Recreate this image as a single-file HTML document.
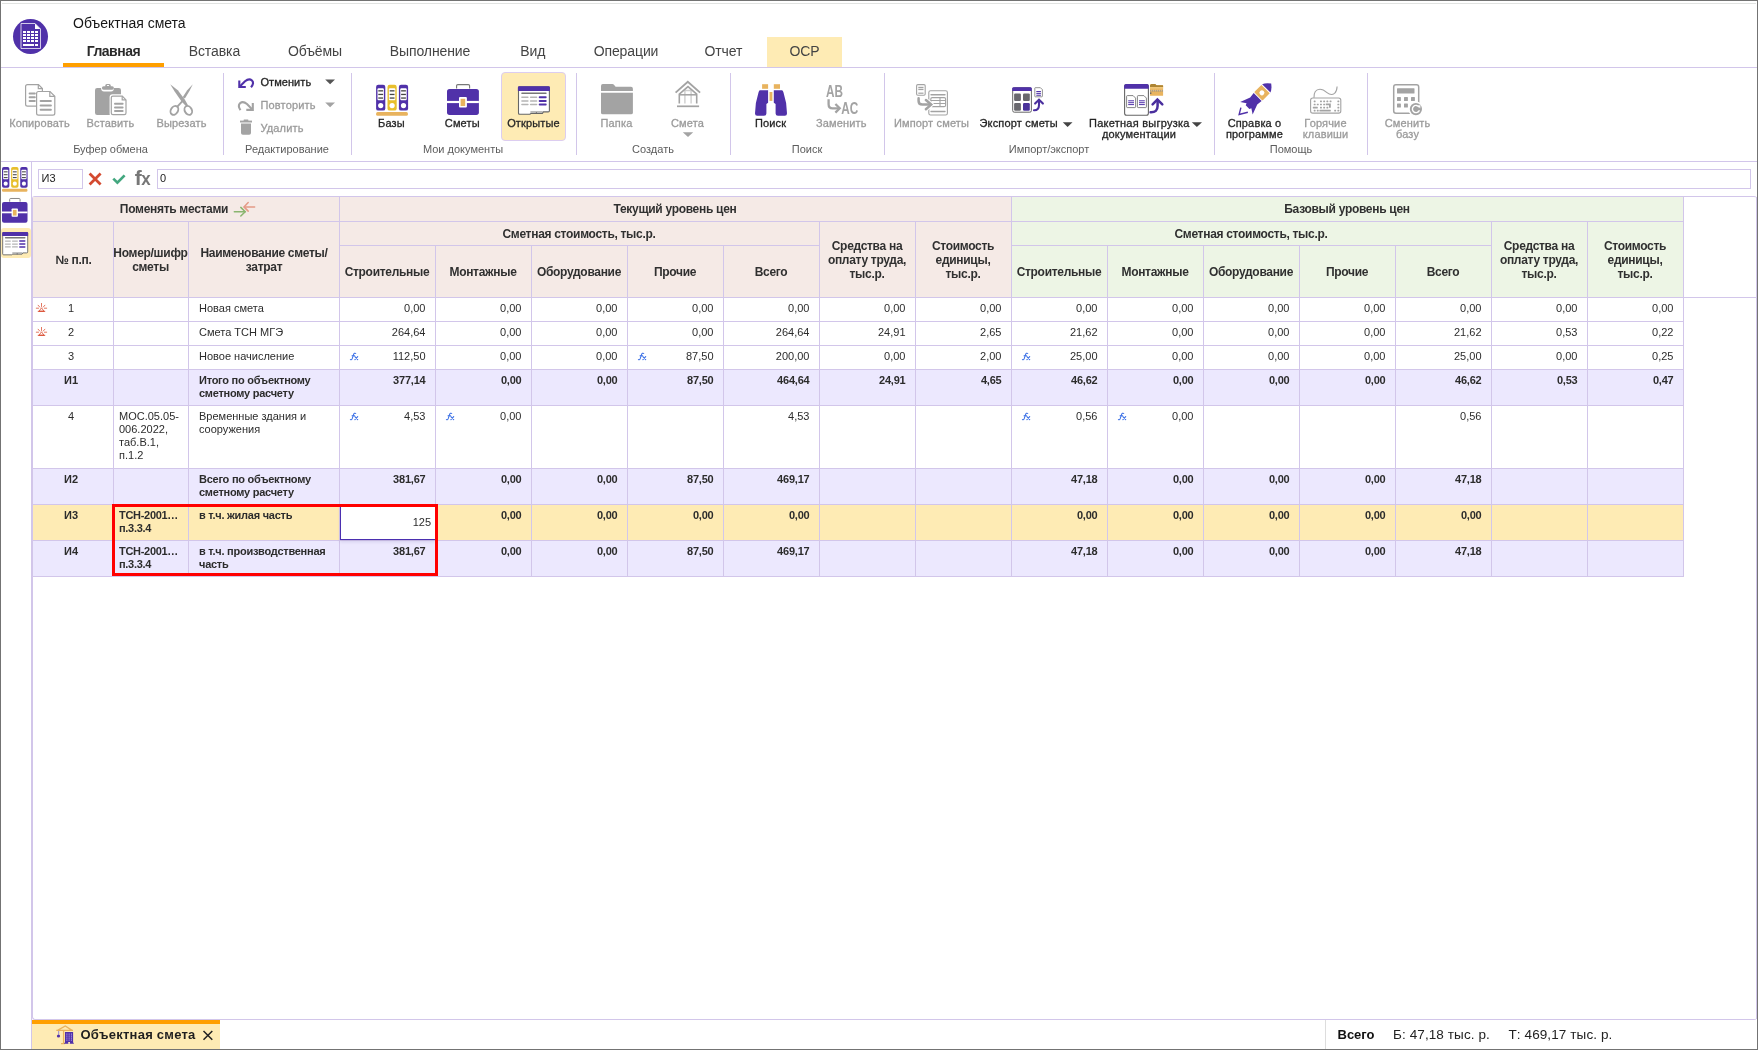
<!DOCTYPE html>
<html><head><meta charset="utf-8"><title>Объектная смета</title>
<style>
html,body{margin:0;padding:0;background:#fff;}
#root{will-change:transform;position:relative;width:1758px;height:1050px;overflow:hidden;background:#fff;font-family:"Liberation Sans",sans-serif;}
#root>div{position:absolute;}
.t{white-space:nowrap;}
svg{position:absolute;left:0;top:0;}
</style></head><body>
<div id="root">
<div style="left:0px;top:0px;width:1758px;height:1px;background:#737373;"></div>
<div style="left:0px;top:0px;width:1px;height:1050px;background:#737373;"></div>
<div style="left:1757px;top:0px;width:1px;height:1050px;background:#737373;"></div>
<div style="left:0px;top:1049px;width:1758px;height:1px;background:#737373;"></div>
<div style="left:2px;top:3px;width:1754px;height:1px;background:#e1e3e1;"></div>
<div class="t" style="top:16px;font-size:14px;line-height:14px;color:#161616;left:73px;">Объектная смета</div>
<div style="left:767px;top:37px;width:75px;height:30px;background:#feebb4;"></div>
<div style="left:63px;top:63px;width:101px;height:4px;background:#ff9f00;"></div>
<div class="t" style="top:44px;font-size:14px;line-height:14px;color:#2a2a2a;font-weight:700;letter-spacing:-0.5px;left:-186.6px;width:600px;text-align:center;">Главная</div>
<div class="t" style="top:44px;font-size:14px;line-height:14px;color:#444;letter-spacing:-0.1px;left:-85.6px;width:600px;text-align:center;">Вставка</div>
<div class="t" style="top:44px;font-size:14px;line-height:14px;color:#444;letter-spacing:-0.1px;left:15px;width:600px;text-align:center;">Объёмы</div>
<div class="t" style="top:44px;font-size:14px;line-height:14px;color:#444;letter-spacing:-0.1px;left:130px;width:600px;text-align:center;">Выполнение</div>
<div class="t" style="top:44px;font-size:14px;line-height:14px;color:#444;letter-spacing:-0.1px;left:232.79999999999995px;width:600px;text-align:center;">Вид</div>
<div class="t" style="top:44px;font-size:14px;line-height:14px;color:#444;letter-spacing:-0.1px;left:326px;width:600px;text-align:center;">Операции</div>
<div class="t" style="top:44px;font-size:14px;line-height:14px;color:#444;letter-spacing:-0.1px;left:423.4px;width:600px;text-align:center;">Отчет</div>
<div class="t" style="top:44px;font-size:14px;line-height:14px;color:#444;letter-spacing:-0.1px;left:504.5px;width:600px;text-align:center;">ОСР</div>
<div style="left:1px;top:67px;width:1756px;height:1px;background:#d2c6ea;"></div>
<div style="left:223px;top:73px;width:1px;height:82px;background:#d2c6ea;"></div>
<div style="left:351px;top:73px;width:1px;height:82px;background:#d2c6ea;"></div>
<div style="left:576px;top:73px;width:1px;height:82px;background:#d2c6ea;"></div>
<div style="left:730px;top:73px;width:1px;height:82px;background:#d2c6ea;"></div>
<div style="left:884px;top:73px;width:1px;height:82px;background:#d2c6ea;"></div>
<div style="left:1214px;top:73px;width:1px;height:82px;background:#d2c6ea;"></div>
<div style="left:1367px;top:73px;width:1px;height:82px;background:#d2c6ea;"></div>
<div style="left:1px;top:161px;width:1756px;height:1px;background:#d2c6ea;"></div>
<div class="t" style="top:118px;font-size:11px;line-height:11px;color:#9b9b9b;letter-spacing:0.15px;left:-260.5px;width:600px;text-align:center;-webkit-text-stroke:0.3px #9b9b9b;">Копировать</div>
<div class="t" style="top:118px;font-size:11px;line-height:11px;color:#9b9b9b;letter-spacing:0.15px;left:-189.5px;width:600px;text-align:center;-webkit-text-stroke:0.3px #9b9b9b;">Вставить</div>
<div class="t" style="top:118px;font-size:11px;line-height:11px;color:#9b9b9b;letter-spacing:0.15px;left:-118.5px;width:600px;text-align:center;-webkit-text-stroke:0.3px #9b9b9b;">Вырезать</div>
<div class="t" style="top:144px;font-size:11px;line-height:11px;color:#5c5c5c;left:-189.5px;width:600px;text-align:center;">Буфер обмена</div>
<div class="t" style="top:77px;font-size:11px;line-height:11px;color:#262626;letter-spacing:0.05px;left:260.5px;-webkit-text-stroke:0.3px #222;">Отменить</div>
<div class="t" style="top:100px;font-size:11px;line-height:11px;color:#9b9b9b;letter-spacing:0.15px;left:260.5px;-webkit-text-stroke:0.3px #9b9b9b;">Повторить</div>
<div class="t" style="top:123px;font-size:11px;line-height:11px;color:#9b9b9b;letter-spacing:0.15px;left:260.5px;-webkit-text-stroke:0.3px #9b9b9b;">Удалить</div>
<div class="t" style="top:144px;font-size:11px;line-height:11px;color:#5c5c5c;left:-13px;width:600px;text-align:center;">Редактирование</div>
<div class="t" style="top:118px;font-size:11px;line-height:11px;color:#262626;letter-spacing:0.15px;left:91.5px;width:600px;text-align:center;-webkit-text-stroke:0.3px #262626;">Базы</div>
<div class="t" style="top:118px;font-size:11px;line-height:11px;color:#262626;letter-spacing:0.15px;left:162.3px;width:600px;text-align:center;-webkit-text-stroke:0.3px #262626;">Сметы</div>
<div style="left:501px;top:72px;width:65px;height:69px;background:#feebb4;border:1px solid #dccdf0;box-sizing:border-box;border-radius:4px;"></div>
<div class="t" style="top:118px;font-size:11px;line-height:11px;color:#262626;letter-spacing:0.15px;left:233.5px;width:600px;text-align:center;-webkit-text-stroke:0.3px #262626;">Открытые</div>
<div class="t" style="top:144px;font-size:11px;line-height:11px;color:#5c5c5c;left:163px;width:600px;text-align:center;">Мои документы</div>
<div class="t" style="top:118px;font-size:11px;line-height:11px;color:#9b9b9b;letter-spacing:0.15px;left:316.5px;width:600px;text-align:center;-webkit-text-stroke:0.3px #9b9b9b;">Папка</div>
<div class="t" style="top:118px;font-size:11px;line-height:11px;color:#9b9b9b;letter-spacing:0.15px;left:387.5px;width:600px;text-align:center;-webkit-text-stroke:0.3px #9b9b9b;">Смета</div>
<div class="t" style="top:144px;font-size:11px;line-height:11px;color:#5c5c5c;left:353px;width:600px;text-align:center;">Создать</div>
<div class="t" style="top:118px;font-size:11px;line-height:11px;color:#262626;letter-spacing:0.15px;left:470.5px;width:600px;text-align:center;-webkit-text-stroke:0.3px #262626;">Поиск</div>
<div class="t" style="top:118px;font-size:11px;line-height:11px;color:#9b9b9b;letter-spacing:0.15px;left:541.3px;width:600px;text-align:center;-webkit-text-stroke:0.3px #9b9b9b;">Заменить</div>
<div class="t" style="top:144px;font-size:11px;line-height:11px;color:#5c5c5c;left:507px;width:600px;text-align:center;">Поиск</div>
<div class="t" style="top:118px;font-size:11px;line-height:11px;color:#9b9b9b;letter-spacing:0.15px;left:631.5px;width:600px;text-align:center;-webkit-text-stroke:0.3px #9b9b9b;">Импорт сметы</div>
<div class="t" style="top:118px;font-size:11px;line-height:11px;color:#262626;letter-spacing:0.17px;left:979.5px;-webkit-text-stroke:0.3px #222;">Экспорт сметы</div>
<div class="t" style="top:118px;font-size:11px;line-height:11px;color:#262626;letter-spacing:0.25px;left:1089px;-webkit-text-stroke:0.3px #222;">Пакетная выгрузка</div>
<div class="t" style="top:129px;font-size:11px;line-height:11px;color:#262626;letter-spacing:0.15px;left:839px;width:600px;text-align:center;-webkit-text-stroke:0.3px #262626;">документации</div>
<div class="t" style="top:144px;font-size:11px;line-height:11px;color:#5c5c5c;left:749px;width:600px;text-align:center;">Импорт/экспорт</div>
<div class="t" style="top:118px;font-size:11px;line-height:11px;color:#262626;letter-spacing:0.15px;left:954.5px;width:600px;text-align:center;-webkit-text-stroke:0.3px #262626;">Справка о</div>
<div class="t" style="top:128.5px;font-size:11px;line-height:11px;color:#262626;letter-spacing:0.15px;left:954.5px;width:600px;text-align:center;-webkit-text-stroke:0.3px #262626;">программе</div>
<div class="t" style="top:118px;font-size:11px;line-height:11px;color:#9b9b9b;letter-spacing:0.15px;left:1025.5px;width:600px;text-align:center;-webkit-text-stroke:0.3px #9b9b9b;">Горячие</div>
<div class="t" style="top:128.5px;font-size:11px;line-height:11px;color:#9b9b9b;letter-spacing:0.15px;left:1025.5px;width:600px;text-align:center;-webkit-text-stroke:0.3px #9b9b9b;">клавиши</div>
<div class="t" style="top:144px;font-size:11px;line-height:11px;color:#5c5c5c;left:991px;width:600px;text-align:center;">Помощь</div>
<div class="t" style="top:118px;font-size:11px;line-height:11px;color:#9b9b9b;letter-spacing:0.15px;left:1107.5px;width:600px;text-align:center;-webkit-text-stroke:0.3px #9b9b9b;">Сменить</div>
<div class="t" style="top:128.5px;font-size:11px;line-height:11px;color:#9b9b9b;letter-spacing:0.15px;left:1107.5px;width:600px;text-align:center;-webkit-text-stroke:0.3px #9b9b9b;">базу</div>
<div style="left:31px;top:161px;width:1px;height:888px;background:#d2c6ea;"></div>
<div style="left:1px;top:228px;width:30px;height:30px;background:#feebb4;border-radius:3px;"></div>
<div style="left:38px;top:169px;width:45px;height:20px;background:#fff;border:1px solid #d2c6ea;box-sizing:border-box;"></div>
<div class="t" style="top:173px;font-size:11px;line-height:11px;color:#222;left:41.5px;">И3</div>
<div style="left:157px;top:169px;width:1594px;height:20px;background:#fff;border:1px solid #d2c6ea;box-sizing:border-box;"></div>
<div class="t" style="top:173px;font-size:11px;line-height:11px;color:#222;left:160px;">0</div>
<div style="left:32px;top:196px;width:1725px;height:824px;box-sizing:border-box;border:1px solid #d2c6ea;border-right:none;border-radius:3px 3px 3px 3px;"></div>
<div style="left:1756px;top:197px;width:1px;height:822px;background:#d2c6ea;"></div>
<div style="left:33px;top:197px;width:978px;height:100px;background:#f5eae6;"></div>
<div style="left:1012px;top:197px;width:671px;height:100px;background:#edf5e5;"></div>
<div style="left:33px;top:370px;width:1650px;height:35px;background:#ece8fe;"></div>
<div style="left:33px;top:469px;width:1650px;height:35px;background:#ece8fe;"></div>
<div style="left:33px;top:505px;width:1650px;height:35px;background:#feebb4;"></div>
<div style="left:33px;top:541px;width:1650px;height:35px;background:#ece8fe;"></div>
<div style="left:33px;top:221px;width:1650px;height:1px;background:#d2c6ea;"></div>
<div style="left:339px;top:245px;width:480px;height:1px;background:#d2c6ea;"></div>
<div style="left:1011px;top:245px;width:480px;height:1px;background:#d2c6ea;"></div>
<div style="left:33px;top:297px;width:1724px;height:1px;background:#d2c6ea;"></div>
<div style="left:339px;top:197px;width:1px;height:100px;background:#d2c6ea;"></div>
<div style="left:1011px;top:197px;width:1px;height:100px;background:#d2c6ea;"></div>
<div style="left:1683px;top:197px;width:1px;height:100px;background:#d2c6ea;"></div>
<div style="left:113px;top:221px;width:1px;height:76px;background:#d2c6ea;"></div>
<div style="left:188px;top:221px;width:1px;height:76px;background:#d2c6ea;"></div>
<div style="left:819px;top:221px;width:1px;height:76px;background:#d2c6ea;"></div>
<div style="left:915px;top:221px;width:1px;height:76px;background:#d2c6ea;"></div>
<div style="left:1491px;top:221px;width:1px;height:76px;background:#d2c6ea;"></div>
<div style="left:1587px;top:221px;width:1px;height:76px;background:#d2c6ea;"></div>
<div style="left:435px;top:245px;width:1px;height:52px;background:#d2c6ea;"></div>
<div style="left:531px;top:245px;width:1px;height:52px;background:#d2c6ea;"></div>
<div style="left:627px;top:245px;width:1px;height:52px;background:#d2c6ea;"></div>
<div style="left:723px;top:245px;width:1px;height:52px;background:#d2c6ea;"></div>
<div style="left:1107px;top:245px;width:1px;height:52px;background:#d2c6ea;"></div>
<div style="left:1203px;top:245px;width:1px;height:52px;background:#d2c6ea;"></div>
<div style="left:1299px;top:245px;width:1px;height:52px;background:#d2c6ea;"></div>
<div style="left:1395px;top:245px;width:1px;height:52px;background:#d2c6ea;"></div>
<div style="left:33px;top:321px;width:1651px;height:1px;background:#d2c6ea;"></div>
<div style="left:33px;top:345px;width:1651px;height:1px;background:#d2c6ea;"></div>
<div style="left:33px;top:369px;width:1651px;height:1px;background:#d2c6ea;"></div>
<div style="left:33px;top:405px;width:1651px;height:1px;background:#d2c6ea;"></div>
<div style="left:33px;top:468px;width:1651px;height:1px;background:#d2c6ea;"></div>
<div style="left:33px;top:504px;width:1651px;height:1px;background:#d2c6ea;"></div>
<div style="left:33px;top:540px;width:1651px;height:1px;background:#d2c6ea;"></div>
<div style="left:33px;top:576px;width:1651px;height:1px;background:#d2c6ea;"></div>
<div style="left:113px;top:297px;width:1px;height:279px;background:#d2c6ea;"></div>
<div style="left:188px;top:297px;width:1px;height:279px;background:#d2c6ea;"></div>
<div style="left:339px;top:297px;width:1px;height:279px;background:#d2c6ea;"></div>
<div style="left:435px;top:297px;width:1px;height:279px;background:#d2c6ea;"></div>
<div style="left:531px;top:297px;width:1px;height:279px;background:#d2c6ea;"></div>
<div style="left:627px;top:297px;width:1px;height:279px;background:#d2c6ea;"></div>
<div style="left:723px;top:297px;width:1px;height:279px;background:#d2c6ea;"></div>
<div style="left:819px;top:297px;width:1px;height:279px;background:#d2c6ea;"></div>
<div style="left:915px;top:297px;width:1px;height:279px;background:#d2c6ea;"></div>
<div style="left:1011px;top:297px;width:1px;height:279px;background:#d2c6ea;"></div>
<div style="left:1107px;top:297px;width:1px;height:279px;background:#d2c6ea;"></div>
<div style="left:1203px;top:297px;width:1px;height:279px;background:#d2c6ea;"></div>
<div style="left:1299px;top:297px;width:1px;height:279px;background:#d2c6ea;"></div>
<div style="left:1395px;top:297px;width:1px;height:279px;background:#d2c6ea;"></div>
<div style="left:1491px;top:297px;width:1px;height:279px;background:#d2c6ea;"></div>
<div style="left:1587px;top:297px;width:1px;height:279px;background:#d2c6ea;"></div>
<div style="left:1683px;top:297px;width:1px;height:279px;background:#d2c6ea;"></div>
<div style="left:1683px;top:196px;width:1px;height:379px;background:#d2c6ea;"></div>
<div class="t" style="top:203px;font-size:12px;line-height:12px;color:#303030;font-weight:700;letter-spacing:-0.3px;left:-126px;width:600px;text-align:center;">Поменять местами</div>
<div class="t" style="top:203px;font-size:12px;line-height:12px;color:#303030;font-weight:700;letter-spacing:-0.3px;left:375px;width:600px;text-align:center;">Текущий уровень цен</div>
<div class="t" style="top:203px;font-size:12px;line-height:12px;color:#303030;font-weight:700;letter-spacing:-0.3px;left:1047px;width:600px;text-align:center;">Базовый уровень цен</div>
<div class="t" style="top:228px;font-size:12px;line-height:12px;color:#303030;font-weight:700;letter-spacing:-0.3px;left:279px;width:600px;text-align:center;">Сметная стоимость, тыс.р.</div>
<div class="t" style="top:228px;font-size:12px;line-height:12px;color:#303030;font-weight:700;letter-spacing:-0.3px;left:951px;width:600px;text-align:center;">Сметная стоимость, тыс.р.</div>
<div class="t" style="top:254px;font-size:12px;line-height:12px;color:#303030;font-weight:700;letter-spacing:-0.3px;left:-226.5px;width:600px;text-align:center;">№ п.п.</div>
<div class="t" style="top:247px;font-size:12px;line-height:12px;color:#303030;font-weight:700;letter-spacing:-0.3px;left:-149.5px;width:600px;text-align:center;">Номер/шифр</div>
<div class="t" style="top:260.5px;font-size:12px;line-height:12px;color:#303030;font-weight:700;letter-spacing:-0.3px;left:-149.5px;width:600px;text-align:center;">сметы</div>
<div class="t" style="top:247px;font-size:12px;line-height:12px;color:#303030;font-weight:700;letter-spacing:-0.3px;left:-36px;width:600px;text-align:center;">Наименование сметы/</div>
<div class="t" style="top:260.5px;font-size:12px;line-height:12px;color:#303030;font-weight:700;letter-spacing:-0.3px;left:-36px;width:600px;text-align:center;">затрат</div>
<div class="t" style="top:266px;font-size:12px;line-height:12px;color:#303030;font-weight:700;letter-spacing:-0.3px;left:87px;width:600px;text-align:center;">Строительные</div>
<div class="t" style="top:266px;font-size:12px;line-height:12px;color:#303030;font-weight:700;letter-spacing:-0.3px;left:183px;width:600px;text-align:center;">Монтажные</div>
<div class="t" style="top:266px;font-size:12px;line-height:12px;color:#303030;font-weight:700;letter-spacing:-0.3px;left:279px;width:600px;text-align:center;">Оборудование</div>
<div class="t" style="top:266px;font-size:12px;line-height:12px;color:#303030;font-weight:700;letter-spacing:-0.3px;left:375px;width:600px;text-align:center;">Прочие</div>
<div class="t" style="top:266px;font-size:12px;line-height:12px;color:#303030;font-weight:700;letter-spacing:-0.3px;left:471px;width:600px;text-align:center;">Всего</div>
<div class="t" style="top:240.3px;font-size:12px;line-height:12px;color:#303030;font-weight:700;letter-spacing:-0.3px;left:567px;width:600px;text-align:center;">Средства на</div>
<div class="t" style="top:254.3px;font-size:12px;line-height:12px;color:#303030;font-weight:700;letter-spacing:-0.3px;left:567px;width:600px;text-align:center;">оплату труда,</div>
<div class="t" style="top:268.4px;font-size:12px;line-height:12px;color:#303030;font-weight:700;letter-spacing:-0.3px;left:567px;width:600px;text-align:center;">тыс.р.</div>
<div class="t" style="top:240.3px;font-size:12px;line-height:12px;color:#303030;font-weight:700;letter-spacing:-0.3px;left:663px;width:600px;text-align:center;">Стоимость</div>
<div class="t" style="top:254.3px;font-size:12px;line-height:12px;color:#303030;font-weight:700;letter-spacing:-0.3px;left:663px;width:600px;text-align:center;">единицы,</div>
<div class="t" style="top:268.4px;font-size:12px;line-height:12px;color:#303030;font-weight:700;letter-spacing:-0.3px;left:663px;width:600px;text-align:center;">тыс.р.</div>
<div class="t" style="top:266px;font-size:12px;line-height:12px;color:#303030;font-weight:700;letter-spacing:-0.3px;left:759px;width:600px;text-align:center;">Строительные</div>
<div class="t" style="top:266px;font-size:12px;line-height:12px;color:#303030;font-weight:700;letter-spacing:-0.3px;left:855px;width:600px;text-align:center;">Монтажные</div>
<div class="t" style="top:266px;font-size:12px;line-height:12px;color:#303030;font-weight:700;letter-spacing:-0.3px;left:951px;width:600px;text-align:center;">Оборудование</div>
<div class="t" style="top:266px;font-size:12px;line-height:12px;color:#303030;font-weight:700;letter-spacing:-0.3px;left:1047px;width:600px;text-align:center;">Прочие</div>
<div class="t" style="top:266px;font-size:12px;line-height:12px;color:#303030;font-weight:700;letter-spacing:-0.3px;left:1143px;width:600px;text-align:center;">Всего</div>
<div class="t" style="top:240.3px;font-size:12px;line-height:12px;color:#303030;font-weight:700;letter-spacing:-0.3px;left:1239px;width:600px;text-align:center;">Средства на</div>
<div class="t" style="top:254.3px;font-size:12px;line-height:12px;color:#303030;font-weight:700;letter-spacing:-0.3px;left:1239px;width:600px;text-align:center;">оплату труда,</div>
<div class="t" style="top:268.4px;font-size:12px;line-height:12px;color:#303030;font-weight:700;letter-spacing:-0.3px;left:1239px;width:600px;text-align:center;">тыс.р.</div>
<div class="t" style="top:240.3px;font-size:12px;line-height:12px;color:#303030;font-weight:700;letter-spacing:-0.3px;left:1335px;width:600px;text-align:center;">Стоимость</div>
<div class="t" style="top:254.3px;font-size:12px;line-height:12px;color:#303030;font-weight:700;letter-spacing:-0.3px;left:1335px;width:600px;text-align:center;">единицы,</div>
<div class="t" style="top:268.4px;font-size:12px;line-height:12px;color:#303030;font-weight:700;letter-spacing:-0.3px;left:1335px;width:600px;text-align:center;">тыс.р.</div>
<div class="t" style="top:303px;font-size:11px;line-height:11px;color:#2c2c2c;left:-229px;width:600px;text-align:center;">1</div>
<div class="t" style="top:303px;font-size:11px;line-height:11px;color:#2c2c2c;left:199px;">Новая смета</div>
<div class="t" style="top:303px;font-size:11px;line-height:11px;color:#2c2c2c;left:-174.5px;width:600px;text-align:right;">0,00</div>
<div class="t" style="top:303px;font-size:11px;line-height:11px;color:#2c2c2c;left:-78.5px;width:600px;text-align:right;">0,00</div>
<div class="t" style="top:303px;font-size:11px;line-height:11px;color:#2c2c2c;left:17.5px;width:600px;text-align:right;">0,00</div>
<div class="t" style="top:303px;font-size:11px;line-height:11px;color:#2c2c2c;left:113.5px;width:600px;text-align:right;">0,00</div>
<div class="t" style="top:303px;font-size:11px;line-height:11px;color:#2c2c2c;left:209.5px;width:600px;text-align:right;">0,00</div>
<div class="t" style="top:303px;font-size:11px;line-height:11px;color:#2c2c2c;left:305.5px;width:600px;text-align:right;">0,00</div>
<div class="t" style="top:303px;font-size:11px;line-height:11px;color:#2c2c2c;left:401.5px;width:600px;text-align:right;">0,00</div>
<div class="t" style="top:303px;font-size:11px;line-height:11px;color:#2c2c2c;left:497.5px;width:600px;text-align:right;">0,00</div>
<div class="t" style="top:303px;font-size:11px;line-height:11px;color:#2c2c2c;left:593.5px;width:600px;text-align:right;">0,00</div>
<div class="t" style="top:303px;font-size:11px;line-height:11px;color:#2c2c2c;left:689.5px;width:600px;text-align:right;">0,00</div>
<div class="t" style="top:303px;font-size:11px;line-height:11px;color:#2c2c2c;left:785.5px;width:600px;text-align:right;">0,00</div>
<div class="t" style="top:303px;font-size:11px;line-height:11px;color:#2c2c2c;left:881.5px;width:600px;text-align:right;">0,00</div>
<div class="t" style="top:303px;font-size:11px;line-height:11px;color:#2c2c2c;left:977.5px;width:600px;text-align:right;">0,00</div>
<div class="t" style="top:303px;font-size:11px;line-height:11px;color:#2c2c2c;left:1073.5px;width:600px;text-align:right;">0,00</div>
<div class="t" style="top:327px;font-size:11px;line-height:11px;color:#2c2c2c;left:-229px;width:600px;text-align:center;">2</div>
<div class="t" style="top:327px;font-size:11px;line-height:11px;color:#2c2c2c;left:199px;">Смета ТСН МГЭ</div>
<div class="t" style="top:327px;font-size:11px;line-height:11px;color:#2c2c2c;left:-174.5px;width:600px;text-align:right;">264,64</div>
<div class="t" style="top:327px;font-size:11px;line-height:11px;color:#2c2c2c;left:-78.5px;width:600px;text-align:right;">0,00</div>
<div class="t" style="top:327px;font-size:11px;line-height:11px;color:#2c2c2c;left:17.5px;width:600px;text-align:right;">0,00</div>
<div class="t" style="top:327px;font-size:11px;line-height:11px;color:#2c2c2c;left:113.5px;width:600px;text-align:right;">0,00</div>
<div class="t" style="top:327px;font-size:11px;line-height:11px;color:#2c2c2c;left:209.5px;width:600px;text-align:right;">264,64</div>
<div class="t" style="top:327px;font-size:11px;line-height:11px;color:#2c2c2c;left:305.5px;width:600px;text-align:right;">24,91</div>
<div class="t" style="top:327px;font-size:11px;line-height:11px;color:#2c2c2c;left:401.5px;width:600px;text-align:right;">2,65</div>
<div class="t" style="top:327px;font-size:11px;line-height:11px;color:#2c2c2c;left:497.5px;width:600px;text-align:right;">21,62</div>
<div class="t" style="top:327px;font-size:11px;line-height:11px;color:#2c2c2c;left:593.5px;width:600px;text-align:right;">0,00</div>
<div class="t" style="top:327px;font-size:11px;line-height:11px;color:#2c2c2c;left:689.5px;width:600px;text-align:right;">0,00</div>
<div class="t" style="top:327px;font-size:11px;line-height:11px;color:#2c2c2c;left:785.5px;width:600px;text-align:right;">0,00</div>
<div class="t" style="top:327px;font-size:11px;line-height:11px;color:#2c2c2c;left:881.5px;width:600px;text-align:right;">21,62</div>
<div class="t" style="top:327px;font-size:11px;line-height:11px;color:#2c2c2c;left:977.5px;width:600px;text-align:right;">0,53</div>
<div class="t" style="top:327px;font-size:11px;line-height:11px;color:#2c2c2c;left:1073.5px;width:600px;text-align:right;">0,22</div>
<div class="t" style="top:351px;font-size:11px;line-height:11px;color:#2c2c2c;left:-229px;width:600px;text-align:center;">3</div>
<div class="t" style="top:351px;font-size:11px;line-height:11px;color:#2c2c2c;left:199px;">Новое начисление</div>
<div class="t" style="top:351px;font-size:11px;line-height:11px;color:#2c2c2c;left:-174.5px;width:600px;text-align:right;">112,50</div>
<div class="t" style="top:351px;font-size:11px;line-height:11px;color:#2c2c2c;left:-78.5px;width:600px;text-align:right;">0,00</div>
<div class="t" style="top:351px;font-size:11px;line-height:11px;color:#2c2c2c;left:17.5px;width:600px;text-align:right;">0,00</div>
<div class="t" style="top:351px;font-size:11px;line-height:11px;color:#2c2c2c;left:113.5px;width:600px;text-align:right;">87,50</div>
<div class="t" style="top:351px;font-size:11px;line-height:11px;color:#2c2c2c;left:209.5px;width:600px;text-align:right;">200,00</div>
<div class="t" style="top:351px;font-size:11px;line-height:11px;color:#2c2c2c;left:305.5px;width:600px;text-align:right;">0,00</div>
<div class="t" style="top:351px;font-size:11px;line-height:11px;color:#2c2c2c;left:401.5px;width:600px;text-align:right;">2,00</div>
<div class="t" style="top:351px;font-size:11px;line-height:11px;color:#2c2c2c;left:497.5px;width:600px;text-align:right;">25,00</div>
<div class="t" style="top:351px;font-size:11px;line-height:11px;color:#2c2c2c;left:593.5px;width:600px;text-align:right;">0,00</div>
<div class="t" style="top:351px;font-size:11px;line-height:11px;color:#2c2c2c;left:689.5px;width:600px;text-align:right;">0,00</div>
<div class="t" style="top:351px;font-size:11px;line-height:11px;color:#2c2c2c;left:785.5px;width:600px;text-align:right;">0,00</div>
<div class="t" style="top:351px;font-size:11px;line-height:11px;color:#2c2c2c;left:881.5px;width:600px;text-align:right;">25,00</div>
<div class="t" style="top:351px;font-size:11px;line-height:11px;color:#2c2c2c;left:977.5px;width:600px;text-align:right;">0,00</div>
<div class="t" style="top:351px;font-size:11px;line-height:11px;color:#2c2c2c;left:1073.5px;width:600px;text-align:right;">0,25</div>
<div class="t" style="top:375px;font-size:11px;line-height:11px;color:#2c2c2c;font-weight:700;left:-229px;width:600px;text-align:center;">И1</div>
<div class="t" style="top:375px;font-size:11px;line-height:11px;color:#2c2c2c;font-weight:700;letter-spacing:-0.25px;left:199px;">Итого по объектному</div>
<div class="t" style="top:388px;font-size:11px;line-height:11px;color:#2c2c2c;font-weight:700;letter-spacing:-0.25px;left:199px;">сметному расчету</div>
<div class="t" style="top:375px;font-size:11px;line-height:11px;color:#2c2c2c;font-weight:700;letter-spacing:-0.2px;left:-174.5px;width:600px;text-align:right;">377,14</div>
<div class="t" style="top:375px;font-size:11px;line-height:11px;color:#2c2c2c;font-weight:700;letter-spacing:-0.2px;left:-78.5px;width:600px;text-align:right;">0,00</div>
<div class="t" style="top:375px;font-size:11px;line-height:11px;color:#2c2c2c;font-weight:700;letter-spacing:-0.2px;left:17.5px;width:600px;text-align:right;">0,00</div>
<div class="t" style="top:375px;font-size:11px;line-height:11px;color:#2c2c2c;font-weight:700;letter-spacing:-0.2px;left:113.5px;width:600px;text-align:right;">87,50</div>
<div class="t" style="top:375px;font-size:11px;line-height:11px;color:#2c2c2c;font-weight:700;letter-spacing:-0.2px;left:209.5px;width:600px;text-align:right;">464,64</div>
<div class="t" style="top:375px;font-size:11px;line-height:11px;color:#2c2c2c;font-weight:700;letter-spacing:-0.2px;left:305.5px;width:600px;text-align:right;">24,91</div>
<div class="t" style="top:375px;font-size:11px;line-height:11px;color:#2c2c2c;font-weight:700;letter-spacing:-0.2px;left:401.5px;width:600px;text-align:right;">4,65</div>
<div class="t" style="top:375px;font-size:11px;line-height:11px;color:#2c2c2c;font-weight:700;letter-spacing:-0.2px;left:497.5px;width:600px;text-align:right;">46,62</div>
<div class="t" style="top:375px;font-size:11px;line-height:11px;color:#2c2c2c;font-weight:700;letter-spacing:-0.2px;left:593.5px;width:600px;text-align:right;">0,00</div>
<div class="t" style="top:375px;font-size:11px;line-height:11px;color:#2c2c2c;font-weight:700;letter-spacing:-0.2px;left:689.5px;width:600px;text-align:right;">0,00</div>
<div class="t" style="top:375px;font-size:11px;line-height:11px;color:#2c2c2c;font-weight:700;letter-spacing:-0.2px;left:785.5px;width:600px;text-align:right;">0,00</div>
<div class="t" style="top:375px;font-size:11px;line-height:11px;color:#2c2c2c;font-weight:700;letter-spacing:-0.2px;left:881.5px;width:600px;text-align:right;">46,62</div>
<div class="t" style="top:375px;font-size:11px;line-height:11px;color:#2c2c2c;font-weight:700;letter-spacing:-0.2px;left:977.5px;width:600px;text-align:right;">0,53</div>
<div class="t" style="top:375px;font-size:11px;line-height:11px;color:#2c2c2c;font-weight:700;letter-spacing:-0.2px;left:1073.5px;width:600px;text-align:right;">0,47</div>
<div class="t" style="top:411px;font-size:11px;line-height:11px;color:#2c2c2c;left:-229px;width:600px;text-align:center;">4</div>
<div class="t" style="top:411px;font-size:11px;line-height:11px;color:#2c2c2c;left:119px;">МОС.05.05-</div>
<div class="t" style="top:424px;font-size:11px;line-height:11px;color:#2c2c2c;left:119px;">006.2022,</div>
<div class="t" style="top:437px;font-size:11px;line-height:11px;color:#2c2c2c;left:119px;">таб.В.1,</div>
<div class="t" style="top:450px;font-size:11px;line-height:11px;color:#2c2c2c;left:119px;">п.1.2</div>
<div class="t" style="top:411px;font-size:11px;line-height:11px;color:#2c2c2c;left:199px;">Временные здания и</div>
<div class="t" style="top:424px;font-size:11px;line-height:11px;color:#2c2c2c;left:199px;">сооружения</div>
<div class="t" style="top:411px;font-size:11px;line-height:11px;color:#2c2c2c;left:-174.5px;width:600px;text-align:right;">4,53</div>
<div class="t" style="top:411px;font-size:11px;line-height:11px;color:#2c2c2c;left:-78.5px;width:600px;text-align:right;">0,00</div>
<div class="t" style="top:411px;font-size:11px;line-height:11px;color:#2c2c2c;left:209.5px;width:600px;text-align:right;">4,53</div>
<div class="t" style="top:411px;font-size:11px;line-height:11px;color:#2c2c2c;left:497.5px;width:600px;text-align:right;">0,56</div>
<div class="t" style="top:411px;font-size:11px;line-height:11px;color:#2c2c2c;left:593.5px;width:600px;text-align:right;">0,00</div>
<div class="t" style="top:411px;font-size:11px;line-height:11px;color:#2c2c2c;left:881.5px;width:600px;text-align:right;">0,56</div>
<div class="t" style="top:474px;font-size:11px;line-height:11px;color:#2c2c2c;font-weight:700;left:-229px;width:600px;text-align:center;">И2</div>
<div class="t" style="top:474px;font-size:11px;line-height:11px;color:#2c2c2c;font-weight:700;letter-spacing:-0.25px;left:199px;">Всего по объектному</div>
<div class="t" style="top:487px;font-size:11px;line-height:11px;color:#2c2c2c;font-weight:700;letter-spacing:-0.25px;left:199px;">сметному расчету</div>
<div class="t" style="top:474px;font-size:11px;line-height:11px;color:#2c2c2c;font-weight:700;letter-spacing:-0.2px;left:-174.5px;width:600px;text-align:right;">381,67</div>
<div class="t" style="top:474px;font-size:11px;line-height:11px;color:#2c2c2c;font-weight:700;letter-spacing:-0.2px;left:-78.5px;width:600px;text-align:right;">0,00</div>
<div class="t" style="top:474px;font-size:11px;line-height:11px;color:#2c2c2c;font-weight:700;letter-spacing:-0.2px;left:17.5px;width:600px;text-align:right;">0,00</div>
<div class="t" style="top:474px;font-size:11px;line-height:11px;color:#2c2c2c;font-weight:700;letter-spacing:-0.2px;left:113.5px;width:600px;text-align:right;">87,50</div>
<div class="t" style="top:474px;font-size:11px;line-height:11px;color:#2c2c2c;font-weight:700;letter-spacing:-0.2px;left:209.5px;width:600px;text-align:right;">469,17</div>
<div class="t" style="top:474px;font-size:11px;line-height:11px;color:#2c2c2c;font-weight:700;letter-spacing:-0.2px;left:497.5px;width:600px;text-align:right;">47,18</div>
<div class="t" style="top:474px;font-size:11px;line-height:11px;color:#2c2c2c;font-weight:700;letter-spacing:-0.2px;left:593.5px;width:600px;text-align:right;">0,00</div>
<div class="t" style="top:474px;font-size:11px;line-height:11px;color:#2c2c2c;font-weight:700;letter-spacing:-0.2px;left:689.5px;width:600px;text-align:right;">0,00</div>
<div class="t" style="top:474px;font-size:11px;line-height:11px;color:#2c2c2c;font-weight:700;letter-spacing:-0.2px;left:785.5px;width:600px;text-align:right;">0,00</div>
<div class="t" style="top:474px;font-size:11px;line-height:11px;color:#2c2c2c;font-weight:700;letter-spacing:-0.2px;left:881.5px;width:600px;text-align:right;">47,18</div>
<div class="t" style="top:510px;font-size:11px;line-height:11px;color:#2c2c2c;font-weight:700;left:-229px;width:600px;text-align:center;">И3</div>
<div class="t" style="top:510px;font-size:11px;line-height:11px;color:#2c2c2c;font-weight:700;letter-spacing:-0.3px;left:119px;">ТСН-2001…</div>
<div class="t" style="top:523px;font-size:11px;line-height:11px;color:#2c2c2c;font-weight:700;letter-spacing:-0.3px;left:119px;">п.3.3.4</div>
<div class="t" style="top:510px;font-size:11px;line-height:11px;color:#2c2c2c;font-weight:700;letter-spacing:-0.25px;left:199px;">в т.ч. жилая часть</div>
<div class="t" style="top:510px;font-size:11px;line-height:11px;color:#2c2c2c;font-weight:700;letter-spacing:-0.2px;left:-78.5px;width:600px;text-align:right;">0,00</div>
<div class="t" style="top:510px;font-size:11px;line-height:11px;color:#2c2c2c;font-weight:700;letter-spacing:-0.2px;left:17.5px;width:600px;text-align:right;">0,00</div>
<div class="t" style="top:510px;font-size:11px;line-height:11px;color:#2c2c2c;font-weight:700;letter-spacing:-0.2px;left:113.5px;width:600px;text-align:right;">0,00</div>
<div class="t" style="top:510px;font-size:11px;line-height:11px;color:#2c2c2c;font-weight:700;letter-spacing:-0.2px;left:209.5px;width:600px;text-align:right;">0,00</div>
<div class="t" style="top:510px;font-size:11px;line-height:11px;color:#2c2c2c;font-weight:700;letter-spacing:-0.2px;left:497.5px;width:600px;text-align:right;">0,00</div>
<div class="t" style="top:510px;font-size:11px;line-height:11px;color:#2c2c2c;font-weight:700;letter-spacing:-0.2px;left:593.5px;width:600px;text-align:right;">0,00</div>
<div class="t" style="top:510px;font-size:11px;line-height:11px;color:#2c2c2c;font-weight:700;letter-spacing:-0.2px;left:689.5px;width:600px;text-align:right;">0,00</div>
<div class="t" style="top:510px;font-size:11px;line-height:11px;color:#2c2c2c;font-weight:700;letter-spacing:-0.2px;left:785.5px;width:600px;text-align:right;">0,00</div>
<div class="t" style="top:510px;font-size:11px;line-height:11px;color:#2c2c2c;font-weight:700;letter-spacing:-0.2px;left:881.5px;width:600px;text-align:right;">0,00</div>
<div style="left:340px;top:505px;width:95px;height:35px;background:#fff;border-left:1px solid #4b2fb0;border-bottom:1px solid #4b2fb0;box-sizing:border-box;box-shadow:0 2px 3px rgba(60,40,120,0.12);"></div>
<div class="t" style="top:517px;font-size:11px;line-height:11px;color:#2c2c2c;left:-169px;width:600px;text-align:right;">125</div>
<div class="t" style="top:546px;font-size:11px;line-height:11px;color:#2c2c2c;font-weight:700;left:-229px;width:600px;text-align:center;">И4</div>
<div class="t" style="top:546px;font-size:11px;line-height:11px;color:#2c2c2c;font-weight:700;letter-spacing:-0.3px;left:119px;">ТСН-2001…</div>
<div class="t" style="top:559px;font-size:11px;line-height:11px;color:#2c2c2c;font-weight:700;letter-spacing:-0.3px;left:119px;">п.3.3.4</div>
<div class="t" style="top:546px;font-size:11px;line-height:11px;color:#2c2c2c;font-weight:700;letter-spacing:-0.25px;left:199px;">в т.ч. производственная</div>
<div class="t" style="top:559px;font-size:11px;line-height:11px;color:#2c2c2c;font-weight:700;letter-spacing:-0.25px;left:199px;">часть</div>
<div class="t" style="top:546px;font-size:11px;line-height:11px;color:#2c2c2c;font-weight:700;letter-spacing:-0.2px;left:-174.5px;width:600px;text-align:right;">381,67</div>
<div class="t" style="top:546px;font-size:11px;line-height:11px;color:#2c2c2c;font-weight:700;letter-spacing:-0.2px;left:-78.5px;width:600px;text-align:right;">0,00</div>
<div class="t" style="top:546px;font-size:11px;line-height:11px;color:#2c2c2c;font-weight:700;letter-spacing:-0.2px;left:17.5px;width:600px;text-align:right;">0,00</div>
<div class="t" style="top:546px;font-size:11px;line-height:11px;color:#2c2c2c;font-weight:700;letter-spacing:-0.2px;left:113.5px;width:600px;text-align:right;">87,50</div>
<div class="t" style="top:546px;font-size:11px;line-height:11px;color:#2c2c2c;font-weight:700;letter-spacing:-0.2px;left:209.5px;width:600px;text-align:right;">469,17</div>
<div class="t" style="top:546px;font-size:11px;line-height:11px;color:#2c2c2c;font-weight:700;letter-spacing:-0.2px;left:497.5px;width:600px;text-align:right;">47,18</div>
<div class="t" style="top:546px;font-size:11px;line-height:11px;color:#2c2c2c;font-weight:700;letter-spacing:-0.2px;left:593.5px;width:600px;text-align:right;">0,00</div>
<div class="t" style="top:546px;font-size:11px;line-height:11px;color:#2c2c2c;font-weight:700;letter-spacing:-0.2px;left:689.5px;width:600px;text-align:right;">0,00</div>
<div class="t" style="top:546px;font-size:11px;line-height:11px;color:#2c2c2c;font-weight:700;letter-spacing:-0.2px;left:785.5px;width:600px;text-align:right;">0,00</div>
<div class="t" style="top:546px;font-size:11px;line-height:11px;color:#2c2c2c;font-weight:700;letter-spacing:-0.2px;left:881.5px;width:600px;text-align:right;">47,18</div>
<div style="left:112px;top:504px;width:326px;height:72px;border:3px solid #f00;box-sizing:border-box;"></div>
<div style="left:32px;top:1020px;width:188px;height:29px;background:#feebb4;"></div>
<div style="left:32px;top:1020px;width:188px;height:4px;background:#ff9f00;"></div>
<div class="t" style="top:1028px;font-size:13px;line-height:13px;color:#1f1f1f;font-weight:700;letter-spacing:0.25px;left:80.5px;">Объектная смета</div>
<div style="left:1325px;top:1020px;width:1px;height:29px;background:#dddddd;"></div>
<div class="t" style="top:1027.5px;font-size:13px;line-height:13px;color:#111;font-weight:700;left:1337.5px;">Всего</div>
<div class="t" style="top:1027.5px;font-size:13.5px;line-height:13.5px;color:#222;letter-spacing:0.1px;left:1393px;">Б: 47,18 тыс. р.</div>
<div class="t" style="top:1027.5px;font-size:13.5px;line-height:13.5px;color:#222;letter-spacing:0.1px;left:1508.5px;">Т: 469,17 тыс. р.</div>
<svg width="1758" height="1050" viewBox="0 0 1758 1050" style="position:absolute;left:0;top:0">
<circle cx="30.5" cy="36.5" r="17.5" fill="#5031a9"/>
<path d="M21,23.5 H35 L40.5,29 V48.5 H21 Z" fill="none" stroke="#fff" stroke-opacity="0.75" stroke-width="1"/>
<path d="M22.3,24.8 H34.5 L39.2,29.5 V47.2 H22.3 Z" fill="#5031a9"/>
<path d="M35,23.5 L40.5,29 H35 Z" fill="#fff"/>
<rect x="23" y="31" width="3" height="2" fill="#fff"/>
<rect x="27" y="31" width="3" height="2" fill="#fff"/>
<rect x="31" y="31" width="3" height="2" fill="#fff"/>
<rect x="35" y="31" width="3" height="2" fill="#fff"/>
<rect x="23" y="34" width="3" height="2" fill="#fff"/>
<rect x="27" y="34" width="3" height="2" fill="#fff"/>
<rect x="31" y="34" width="3" height="2" fill="#fff"/>
<rect x="35" y="34" width="3" height="2" fill="#fff"/>
<rect x="23" y="37" width="3" height="2" fill="#fff"/>
<rect x="27" y="37" width="3" height="2" fill="#fff"/>
<rect x="31" y="37" width="3" height="2" fill="#fff"/>
<rect x="35" y="37" width="3" height="2" fill="#fff"/>
<rect x="23" y="40" width="3" height="2" fill="#fff"/>
<rect x="27" y="40" width="3" height="2" fill="#fff"/>
<rect x="31" y="40" width="3" height="2" fill="#fff"/>
<rect x="35" y="40" width="3" height="2" fill="#fff"/>
<rect x="23" y="44" width="11" height="2" fill="#fff"/><rect x="35" y="44" width="3" height="2" fill="#fff"/>
<g fill="none" stroke="#a3a3a3" stroke-width="1.2"><path d="M27.5,84.6 H38.5 L42.4,88.5 V106.2 H27.5 Q25.6,106.2 25.6,104.3 V86.5 Q25.6,84.6 27.5,84.6 Z" fill="#fff"/><path d="M38.3,84.6 V88.6 H42.4"/></g>
<g fill="#a3a3a3"><rect x="28.6" y="92.4" width="7.2" height="2" rx="1"/><rect x="28.6" y="96.2" width="7.2" height="2" rx="1"/><rect x="28.6" y="100" width="7.2" height="2" rx="1"/></g>
<g fill="#fff" stroke="#a3a3a3" stroke-width="1.2"><path d="M38.5,91.5 H50 L54.8,96.3 V113.3 Q54.8,115.2 52.9,115.2 H38.5 Q36.6,115.2 36.6,113.3 V93.4 Q36.6,91.5 38.5,91.5 Z"/><path d="M49.8,91.5 V96.3 H54.8" fill="none"/></g>
<g fill="#a3a3a3"><rect x="39.6" y="100" width="12.3" height="2.1" rx="1"/><rect x="39.6" y="104.4" width="12.3" height="2.1" rx="1"/><rect x="39.6" y="108.7" width="12.3" height="2.1" rx="1"/></g>
<rect x="95" y="88" width="26" height="27" rx="2.2" fill="#a3a3a3"/>
<path d="M101,87.5 Q101,91.5 104,91.5 H111 Q114,91.5 114,87.5" fill="#fff"/>
<rect x="101.9" y="86.3" width="12" height="3.4" rx="1.7" fill="#a3a3a3"/><rect x="105.2" y="84.1" width="5.6" height="3.6" rx="1.6" fill="#a3a3a3"/><rect x="106.9" y="85" width="2.2" height="1.1" rx="0.5" fill="#fff"/>
<path d="M112.5,95.2 H122.5 L126.8,99.5 V113.8 Q126.8,115.7 124.9,115.7 H112.5 Q110.6,115.7 110.6,113.8 V97.1 Q110.6,95.2 112.5,95.2 Z" fill="#fff" stroke="#fff" stroke-width="2"/>
<path d="M112.9,96.2 H122.3 L126,99.9 V113 Q126,114.7 124.3,114.7 H112.9 Q111.3,114.7 111.3,113 V97.8 Q111.3,96.2 112.9,96.2 Z" fill="#fff" stroke="#a3a3a3" stroke-width="1.2"/>
<path d="M122.2,96.2 V99.9 H126" fill="none" stroke="#a3a3a3" stroke-width="1.2"/>
<g fill="#a3a3a3"><rect x="114" y="102.8" width="9.6" height="2" rx="1"/><rect x="114" y="106.4" width="9.6" height="2" rx="1"/><rect x="114" y="110" width="9.6" height="2" rx="1"/></g>
<path d="M170.2,84.3 L177.8,90.3 L184.6,99.3 L188.2,105.6 L186.3,106.6 L181.6,101.4 L174.8,91.8 Z" fill="#a3a3a3"/>
<path d="M192.8,84.3 L189.6,90.8 L184.9,98.6 L182.6,97.2 L187.2,90.2 Z" fill="#a3a3a3"/>
<path d="M182.4,101.2 L177.6,106.4" stroke="#a3a3a3" stroke-width="1.9" fill="none"/>
<g fill="none" stroke="#a3a3a3" stroke-width="1.9"><ellipse cx="174.4" cy="110.4" rx="3.5" ry="4.7" transform="rotate(32 174.4 110.4)"/><ellipse cx="188.3" cy="110.4" rx="3.5" ry="4.7" transform="rotate(-28 188.3 110.4)"/></g>
<g fill="none" stroke="#5031a9" stroke-width="2.1"><path d="M239.3,80.5 V87 H245.8"/><path d="M239.8,86.5 L245,81.2 Q249,78 252,80.5 Q254.5,83.2 251,87.2"/></g>
<g fill="none" stroke="#a3a3a3" stroke-width="2.1"><path d="M252.8,103 V109.9 H246.3"/><path d="M252.3,109.5 L247,104 Q243,100.8 240,103.3 Q237.5,106 240.5,110.2"/></g>
<rect x="240" y="120.6" width="12" height="1.9" fill="#a3a3a3"/><rect x="243.5" y="119.5" width="5" height="1.5" rx="0.7" fill="#a3a3a3"/><path d="M241,123.5 H251 V133 Q251,134.8 249.2,134.8 H242.8 Q241,134.8 241,133 Z" fill="#a3a3a3"/>
<path d="M325.2,79.5 H335 L330.1,84.3 Z" fill="#555"/>
<path d="M325.2,102.5 H335 L330.1,107.3 Z" fill="#a3a3a3"/>
<g transform="translate(376.1 84.8) scale(1.0)"><rect x="0.0" y="0" width="9.2" height="25.8" rx="2.2" fill="#5031a9"/><rect x="1.4" y="3.4" width="6.4" height="12" rx="1" fill="#fff"/><rect x="2.2" y="5.4" width="4.8" height="1.3" fill="#444"/><rect x="2.2" y="9" width="4.8" height="1.3" fill="#444"/><rect x="2.2" y="12.6" width="4.8" height="1.3" fill="#444"/><circle cx="4.6" cy="20.8" r="2.6" fill="#fff"/><rect x="11.4" y="0" width="9.2" height="25.8" rx="2.2" fill="#e8bf2c"/><rect x="12.8" y="3.4" width="6.4" height="12" rx="1" fill="#fff"/><rect x="13.600000000000001" y="5.4" width="4.8" height="1.3" fill="#444"/><rect x="13.600000000000001" y="9" width="4.8" height="1.3" fill="#444"/><rect x="13.600000000000001" y="12.6" width="4.8" height="1.3" fill="#444"/><circle cx="16.0" cy="20.8" r="2.6" fill="#fff"/><rect x="22.8" y="0" width="9.2" height="25.8" rx="2.2" fill="#5031a9"/><rect x="24.2" y="3.4" width="6.4" height="12" rx="1" fill="#fff"/><rect x="25.0" y="5.4" width="4.8" height="1.3" fill="#444"/><rect x="25.0" y="9" width="4.8" height="1.3" fill="#444"/><rect x="25.0" y="12.6" width="4.8" height="1.3" fill="#444"/><circle cx="27.4" cy="20.8" r="2.6" fill="#fff"/><rect x="0" y="27.3" width="31.8" height="3.6" rx="1.5" fill="#e8b35e"/></g>
<g transform="translate(447 84) scale(1.0)"><path d="M9.6,4.6 V1.8 Q9.6,0.6 10.8,0.6 H21.4 Q22.6,0.6 22.6,1.8 V4.6" fill="none" stroke="#777" stroke-width="1.1"/><rect x="0" y="4.9" width="31.9" height="26" rx="2.6" fill="#5031a9"/><rect x="0" y="16.9" width="31.9" height="2.2" fill="#fff"/><rect x="12" y="13.1" width="7.9" height="10.4" rx="1" fill="#fff"/><rect x="13.6" y="14.8" width="4.6" height="7.2" fill="#e8b35e"/></g>
<g transform="translate(517.9 86.1) scale(1.0)"><path d="M1.5,0.6 H30.5 Q31.5,0.6 31.5,1.8 V24.6 Q31.5,25.8 30.3,25.8 H25.5 L24.5,27.4 H13 L12,28.2 H1.8 Q0.6,28.2 0.6,27 V1.8 Q0.6,0.6 1.5,0.6 Z" fill="#fff" stroke="#666" stroke-width="1.1"/><path d="M1.2,0.1 H30.8 Q32,0.1 32,1.3 V4.9 H0 V1.3 Q0,0.1 1.2,0.1 Z" fill="#5031a9"/><rect x="3.3" y="6.3" width="25.5" height="1.6" rx="0.8" fill="#777"/><rect x="3.3" y="10.4" width="7.4" height="1.5" rx="0.7" fill="#b5b5b5"/><rect x="12" y="10.4" width="7.4" height="1.5" rx="0.7" fill="#b5b5b5"/><rect x="20.8" y="10.200000000000001" width="8" height="1.9" rx="0.9" fill="#5031a9"/><rect x="3.3" y="14.1" width="7.4" height="1.5" rx="0.7" fill="#b5b5b5"/><rect x="12" y="14.1" width="7.4" height="1.5" rx="0.7" fill="#b5b5b5"/><rect x="20.8" y="13.9" width="8" height="1.9" rx="0.9" fill="#5031a9"/><rect x="3.3" y="17.7" width="7.4" height="1.5" rx="0.7" fill="#b5b5b5"/><rect x="12" y="17.7" width="7.4" height="1.5" rx="0.7" fill="#b5b5b5"/><rect x="20.8" y="17.5" width="8" height="1.9" rx="0.9" fill="#5031a9"/><path d="M12.5,25.9 H24.8 M18.5,26 V27.8" stroke="#666" stroke-width="0.9" fill="none"/></g>
<path d="M682.8,132.2 H693.2 L688,137 Z" fill="#a3a3a3"/>
<path d="M602.8,84.1 H612.5 Q613.8,84.1 614.8,85.7 L615.6,86.8 H631 Q632.9,86.8 632.9,88.7 V91 H601 V85.9 Q601,84.1 602.8,84.1 Z" fill="#a3a3a3"/>
<path d="M601,92.8 H632.9 V112.4 Q632.9,114.3 631,114.3 H602.9 Q601,114.3 601,112.4 Z" fill="#a3a3a3"/>
<g fill="none" stroke="#cfcfcf" stroke-width="1.4"><path d="M684.9,90.3 V103.6 M691.1,90.3 V103.6 M684.9,90.5 H691.1"/></g>
<g fill="none" stroke="#a3a3a3"><path d="M675.6,92.6 L687.8,81.7 L700.1,92.6" stroke-width="1.9"/><path d="M679.3,103.6 V94.2 L688,86.6 L696.7,94.2 V103.6" stroke-width="1.6"/><path d="M679.3,94.8 H696.7" stroke-width="1.5"/><path d="M677,106.3 H699.1" stroke-width="1.7"/></g>
<rect x="762.1" y="84.2" width="6" height="4.6" fill="#e8b35e"/><rect x="773.8" y="84.2" width="6.2" height="4.6" fill="#e8b35e"/><rect x="769.5" y="92" width="2.9" height="8.9" fill="#e8b35e"/>
<path d="M760,90.3 H768.1 V102.8 L766.4,104 V113.5 Q766.4,115.8 764,115.8 H757.2 Q755,115.8 755,113.5 Q755,103 758.5,92.5 Q759,90.3 760,90.3 Z" fill="#5031a9"/>
<path d="M781.8,90.3 H773.8 V102.8 L775.6,104 V113.5 Q775.6,115.8 778,115.8 H784.8 Q787,115.8 787,113.5 Q787,103 783.5,92.5 Q783,90.3 781.8,90.3 Z" fill="#5031a9"/>
<text x="826" y="97.2" font-family="Liberation Sans" font-weight="700" font-size="16.5" fill="#a3a3a3" textLength="17" lengthAdjust="spacingAndGlyphs">AB</text>
<text x="841.2" y="114.3" font-family="Liberation Sans" font-weight="700" font-size="16.5" fill="#a3a3a3" textLength="17" lengthAdjust="spacingAndGlyphs">AC</text>
<g fill="none" stroke="#a3a3a3" stroke-width="2.3"><path d="M828.6,99.2 V104.2 Q828.6,108.3 832.6,108.3 H839.5"/><path d="M835.4,104 L839.7,108.3 L835.4,112.6"/></g>
<path d="M1062.8,122.3 H1072.5 L1067.6,127 Z" fill="#444"/>
<path d="M1191.8,122.3 H1202 L1196.9,127 Z" fill="#444"/>
<g fill="none" stroke="#a3a3a3" stroke-width="1.1"><rect x="916.6" y="84.6" width="8.6" height="10.6" rx="1.2" fill="#fff"/><rect x="928.8" y="90.8" width="18.6" height="24.2" rx="1.8" fill="#fff"/><rect x="930.8" y="97.6" width="14.8" height="9" rx="1.4"/><path d="M930.8,100.5 H945.6 M930.8,103.5 H945.6 M940,97.6 V106.6"/></g>
<g fill="#a3a3a3"><rect x="918.3" y="86.8" width="5.2" height="1.3"/><rect x="918.3" y="88.8" width="5.2" height="1.3"/><rect x="918.3" y="92.6" width="5.2" height="1.2"/><rect x="930.3" y="94.1" width="15.4" height="1.4" rx="0.7"/><rect x="930.3" y="110.8" width="15.4" height="1.4" rx="0.7"/></g>
<g fill="none" stroke="#fff" stroke-width="4.6" stroke-linecap="round"><path d="M925.7,100 L931.2,104.6 L925.7,109.3"/></g>
<g fill="none" stroke="#a3a3a3" stroke-width="2.5" stroke-linecap="round"><path d="M918.6,98.2 V101 Q918.6,104.6 922.4,104.6 H930.5"/><path d="M925.9,100 L931.2,104.6 L925.9,109.2"/></g>
<rect x="1012.7" y="87.7" width="18.7" height="24.5" rx="1.6" fill="#fff" stroke="#666" stroke-width="1"/>
<path d="M1013.6,87.2 H1030.4 Q1031.8,87.2 1031.8,88.6 V91 H1012.2 V88.6 Q1012.2,87.2 1013.6,87.2 Z" fill="#5031a9"/>
<g fill="#69686e"><rect x="1014.1" y="93.4" width="6.8" height="7.6" rx="1.2"/><rect x="1023" y="93.4" width="6.8" height="7.6" rx="1.2"/><rect x="1014.1" y="103.1" width="6.8" height="7.7" rx="1.2"/></g>
<rect x="1023" y="103.1" width="6.8" height="7.7" rx="1.2" fill="#4b339a"/>
<path d="M1035.3,87.7 H1040.4 L1042.4,89.7 V96.2 Q1042.4,96.8 1041.8,96.8 H1035.3 Q1034.8,96.8 1034.8,96.2 V88.2 Q1034.8,87.7 1035.3,87.7 Z" fill="#fff" stroke="#777" stroke-width="0.8"/>
<g fill="#5031a9"><rect x="1036.3" y="91" width="4.6" height="1.05"/><rect x="1036.3" y="92.85" width="4.6" height="1.05"/><rect x="1036.3" y="94.7" width="4.6" height="1.05"/></g>
<g fill="none" stroke="#4a2f9e" stroke-width="2.1" stroke-linecap="round"><path d="M1034,110.3 Q1039,110.5 1039,105 V100.3"/><path d="M1035.1,103.6 L1039,99.7 L1042.9,103.6"/></g>
<rect x="1124.6" y="84.6" width="23.8" height="30.6" rx="2" fill="#fff" stroke="#666" stroke-width="1.1"/>
<path d="M1126.1,84.1 H1147 Q1148.8,84.1 1148.8,85.9 V88.7 H1124.1 V85.9 Q1124.1,84.1 1126.1,84.1 Z" fill="#5031a9"/>
<path d="M1127.3999999999999,95.6 H1133.1 L1135.6,98.1 V106.8 Q1135.6,107.6 1134.8,107.6 H1127.3999999999999 Q1126.6,107.6 1126.6,106.8 V96.4 Q1126.6,95.6 1127.3999999999999,95.6 Z" fill="#fff" stroke="#666" stroke-width="0.8"/>
<g fill="#5031a9"><rect x="1128.1999999999998" y="100.3" width="5.8" height="1"/><rect x="1128.1999999999998" y="102.2" width="5.8" height="1"/><rect x="1128.1999999999998" y="104.1" width="5.8" height="1"/></g>
<path d="M1138.2,95.6 H1143.9 L1146.4,98.1 V106.8 Q1146.4,107.6 1145.6000000000001,107.6 H1138.2 Q1137.4,107.6 1137.4,106.8 V96.4 Q1137.4,95.6 1138.2,95.6 Z" fill="#fff" stroke="#666" stroke-width="0.8"/>
<g fill="#5031a9"><rect x="1139.0" y="100.3" width="5.8" height="1"/><rect x="1139.0" y="102.2" width="5.8" height="1"/><rect x="1139.0" y="104.1" width="5.8" height="1"/></g>
<path d="M1150,85.6 Q1150,84.1 1151.6,84.1 H1155.2 L1156.5,85.2 H1162.6 Q1163.1,85.2 1163.1,85.8 V95.4 Q1163.1,95.8 1162.6,95.8 H1150.5 Q1150,95.8 1150,95.3 Z" fill="#e9b45f"/>
<path d="M1150,85.6 Q1150,84.1 1151.6,84.1 H1155.2 L1156.5,85.2 H1162.6 Q1163.1,85.2 1163.1,85.8 V87.1 H1150 Z" fill="#ad8534"/><rect x="1150" y="87.2" width="13.1" height="1.3" fill="#f4cd82"/>
<path d="M1150.2,90.9 H1163" stroke="#7d8796" stroke-width="1.3" stroke-dasharray="1.1 0.9"/><path d="M1150.8,90.2 H1163" stroke="#fff" stroke-width="0.6" stroke-dasharray="0.8 1.2" opacity="0.8"/><rect x="1150" y="92.4" width="1.4" height="1.6" fill="#6e6a66"/>
<g fill="none" stroke="#4a2f9e" stroke-width="2.5" stroke-linecap="round"><path d="M1150.6,112.3 Q1157.6,112.6 1157.6,106 V100.4"/><path d="M1152.6,104.3 L1157.4,99.5 L1162.3,104.3"/></g>
<g transform="translate(1258.3 96.4) rotate(45)"><path d="M0,-18.2 Q4.6,-14.8 5.9,-11.3 H-5.9 Q-4.6,-14.8 0,-18.2 Z" fill="#5031a9"/><path d="M-5.9,-10.3 H5.9 V-0.9 Q5.9,0 5,0 H-5 Q-5.9,0 -5.9,-0.9 Z" fill="#e8b35e"/><circle cx="0" cy="-5.1" r="2.5" fill="#fff"/><path d="M-5.6,0.9 H5.6 L5,6.5 L8.8,16.8 L3.4,13.2 L2.6,15.2 H-2.6 L-3.4,13.2 L-8.8,16.8 L-5,6.5 Z" fill="#5031a9"/><path d="M-4.4,20.2 L-0.8,26.3 L3.8,18.6" fill="none" stroke="#5031a9" stroke-width="1.4"/></g>
<g fill="none" stroke="#a3a3a3" stroke-width="1.1"><rect x="1310.6" y="98" width="30.2" height="15.1" rx="2.2"/><path d="M1314,97.9 Q1313.6,89.4 1320,89.3 Q1323,89.3 1327,92.6 Q1331,95.9 1334.6,93.4 Q1336.9,91.4 1337.1,86.6"/></g>
<g fill="#a3a3a3"><rect x="1313.7" y="100.6" width="1.9" height="1.6" rx="0.4"/><rect x="1320" y="100.6" width="1.9" height="1.6" rx="0.4"/><rect x="1323.2" y="100.6" width="1.9" height="1.6" rx="0.4"/><rect x="1326.4" y="100.6" width="1.9" height="1.6" rx="0.4"/><rect x="1329.6" y="100.6" width="1.9" height="1.6" rx="0.4"/><rect x="1337.4" y="100.6" width="1.9" height="1.6" rx="0.4"/><rect x="1313.7" y="103.7" width="1.9" height="1.6" rx="0.4"/><rect x="1316.8" y="103.7" width="1.9" height="1.6" rx="0.4"/><rect x="1320" y="103.7" width="1.9" height="1.6" rx="0.4"/><rect x="1323.2" y="103.7" width="1.9" height="1.6" rx="0.4"/><rect x="1337.4" y="103.7" width="1.9" height="1.6" rx="0.4"/><rect x="1320" y="106.8" width="1.9" height="1.6" rx="0.4"/><rect x="1323.2" y="106.8" width="1.9" height="1.6" rx="0.4"/><rect x="1326.4" y="106.8" width="1.9" height="1.6" rx="0.4"/><rect x="1337.4" y="106.8" width="1.9" height="1.6" rx="0.4"/><rect x="1312.8" y="106.8" width="5" height="1.6" rx="0.4"/><rect x="1313.7" y="109.8" width="1.9" height="1.6" rx="0.4"/><rect x="1316.8" y="109.8" width="1.9" height="1.6" rx="0.4"/><rect x="1334.2" y="109.8" width="1.9" height="1.6" rx="0.4"/><rect x="1337.4" y="109.8" width="1.9" height="1.6" rx="0.4"/><rect x="1319.4" y="109.8" width="11.4" height="1.6" rx="0.4"/><path d="M1325.8,103.5 H1330.8 V107.8 H1329 V105.3 H1325.8 Z"/></g>
<rect x="1393.7" y="84.7" width="25" height="28.6" rx="2.2" fill="#fff" stroke="#a3a3a3" stroke-width="1.5"/>
<g fill="#a3a3a3"><rect x="1397" y="88.2" width="17.5" height="5.4" rx="0.6"/><rect x="1397" y="97.0" width="3.9" height="3.9" rx="0.5"/><rect x="1397" y="103.5" width="3.9" height="3.9" rx="0.5"/><rect x="1404" y="97.0" width="3.9" height="3.9" rx="0.5"/><rect x="1404" y="103.5" width="3.9" height="3.9" rx="0.5"/><rect x="1411" y="97.0" width="3.9" height="3.9" rx="0.5"/></g>
<circle cx="1415.9" cy="109.1" r="7.6" fill="#fff"/><circle cx="1415.9" cy="109.1" r="6.1" fill="#a3a3a3"/><path d="M1419.1,107.2 A3.6,3.6 0 1 0 1419.4,110.2" fill="none" stroke="#fff" stroke-width="1.4"/><path d="M1417.6,105.6 L1420.4,105.2 L1420.2,108.4 Z" fill="#fff"/>
<g transform="translate(2 167) scale(0.8)"><rect x="0.0" y="0" width="9.2" height="25.8" rx="2.2" fill="#5031a9"/><rect x="1.4" y="3.4" width="6.4" height="12" rx="1" fill="#fff"/><rect x="2.2" y="5.4" width="4.8" height="1.3" fill="#444"/><rect x="2.2" y="9" width="4.8" height="1.3" fill="#444"/><rect x="2.2" y="12.6" width="4.8" height="1.3" fill="#444"/><circle cx="4.6" cy="20.8" r="2.6" fill="#fff"/><rect x="11.4" y="0" width="9.2" height="25.8" rx="2.2" fill="#e8bf2c"/><rect x="12.8" y="3.4" width="6.4" height="12" rx="1" fill="#fff"/><rect x="13.600000000000001" y="5.4" width="4.8" height="1.3" fill="#444"/><rect x="13.600000000000001" y="9" width="4.8" height="1.3" fill="#444"/><rect x="13.600000000000001" y="12.6" width="4.8" height="1.3" fill="#444"/><circle cx="16.0" cy="20.8" r="2.6" fill="#fff"/><rect x="22.8" y="0" width="9.2" height="25.8" rx="2.2" fill="#5031a9"/><rect x="24.2" y="3.4" width="6.4" height="12" rx="1" fill="#fff"/><rect x="25.0" y="5.4" width="4.8" height="1.3" fill="#444"/><rect x="25.0" y="9" width="4.8" height="1.3" fill="#444"/><rect x="25.0" y="12.6" width="4.8" height="1.3" fill="#444"/><circle cx="27.4" cy="20.8" r="2.6" fill="#fff"/><rect x="0" y="27.3" width="31.8" height="3.6" rx="1.5" fill="#e8b35e"/></g>
<g transform="translate(2 198) scale(0.8)"><path d="M9.6,4.6 V1.8 Q9.6,0.6 10.8,0.6 H21.4 Q22.6,0.6 22.6,1.8 V4.6" fill="none" stroke="#777" stroke-width="1.1"/><rect x="0" y="4.9" width="31.9" height="26" rx="2.6" fill="#5031a9"/><rect x="0" y="16.9" width="31.9" height="2.2" fill="#fff"/><rect x="12" y="13.1" width="7.9" height="10.4" rx="1" fill="#fff"/><rect x="13.6" y="14.8" width="4.6" height="7.2" fill="#e8b35e"/></g>
<g transform="translate(2.2 232) scale(0.81)"><path d="M1.5,0.6 H30.5 Q31.5,0.6 31.5,1.8 V24.6 Q31.5,25.8 30.3,25.8 H25.5 L24.5,27.4 H13 L12,28.2 H1.8 Q0.6,28.2 0.6,27 V1.8 Q0.6,0.6 1.5,0.6 Z" fill="#fff" stroke="#666" stroke-width="1.1"/><path d="M1.2,0.1 H30.8 Q32,0.1 32,1.3 V4.9 H0 V1.3 Q0,0.1 1.2,0.1 Z" fill="#5031a9"/><rect x="3.3" y="6.3" width="25.5" height="1.6" rx="0.8" fill="#777"/><rect x="3.3" y="10.4" width="7.4" height="1.5" rx="0.7" fill="#b5b5b5"/><rect x="12" y="10.4" width="7.4" height="1.5" rx="0.7" fill="#b5b5b5"/><rect x="20.8" y="10.200000000000001" width="8" height="1.9" rx="0.9" fill="#5031a9"/><rect x="3.3" y="14.1" width="7.4" height="1.5" rx="0.7" fill="#b5b5b5"/><rect x="12" y="14.1" width="7.4" height="1.5" rx="0.7" fill="#b5b5b5"/><rect x="20.8" y="13.9" width="8" height="1.9" rx="0.9" fill="#5031a9"/><rect x="3.3" y="17.7" width="7.4" height="1.5" rx="0.7" fill="#b5b5b5"/><rect x="12" y="17.7" width="7.4" height="1.5" rx="0.7" fill="#b5b5b5"/><rect x="20.8" y="17.5" width="8" height="1.9" rx="0.9" fill="#5031a9"/><path d="M12.5,25.9 H24.8 M18.5,26 V27.8" stroke="#666" stroke-width="0.9" fill="none"/></g>
<g stroke="#d44a30" stroke-width="2.7" fill="none"><path d="M89.6,173.5 L100.6,184.5 M100.6,173.5 L89.6,184.5"/></g>
<path d="M113.3,178.6 L117.4,182.6 L124.6,175.4" stroke="#43a77f" stroke-width="2.7" fill="none"/>
<text x="134.8" y="185.4" font-family="Liberation Sans" font-weight="700" font-size="21" fill="#777">f</text><text x="141.3" y="185.4" font-family="Liberation Sans" font-weight="700" font-size="17.5" fill="#777" textLength="9.4" lengthAdjust="spacingAndGlyphs">x</text>
<g fill="none" stroke="#8ab56f" stroke-width="1.5" stroke-linecap="round"><path d="M234.3,211.7 H245"/><path d="M240.8,207.4 L245.2,211.7 L240.8,216"/></g>
<g fill="none" stroke="#e49a86" stroke-width="1.5" stroke-linecap="round"><path d="M254.6,206.9 H244.5"/><path d="M248.2,202.6 L244,206.9 L248.2,211.1"/></g>
<g transform="translate(0 303.2)" fill="none" stroke="#d9492c" stroke-width="0.75" stroke-linecap="round"><path d="M41.5,0.2 V3.3 M38.1,2 L39.8,3.9 M44.9,2 L43.2,3.9 M36.3,5 H38.6 M46.7,5 H44.4"/><path d="M39.3,7.7 L41.5,4.6 L43.7,7.7 Z" stroke-width="0.8"/><path d="M38.2,8.1 H44.8" stroke-width="1"/></g>
<g transform="translate(0 327.2)" fill="none" stroke="#d9492c" stroke-width="0.75" stroke-linecap="round"><path d="M41.5,0.2 V3.3 M38.1,2 L39.8,3.9 M44.9,2 L43.2,3.9 M36.3,5 H38.6 M46.7,5 H44.4"/><path d="M39.3,7.7 L41.5,4.6 L43.7,7.7 Z" stroke-width="0.8"/><path d="M38.2,8.1 H44.8" stroke-width="1"/></g>
<g transform="translate(350 360)" fill="none" stroke="#3a6fe6" stroke-width="1.05" stroke-linecap="round"><path d="M0.4,-0.4 Q1.6,0.3 2.3,-1.6 L3.6,-5.6 Q4.3,-7.3 5.7,-6.6"/><path d="M2,-4.2 H4.6"/><path d="M4.9,-3.3 L7.7,-0.4 M7.7,-3.3 L4.9,-0.4" stroke-width="1.1"/></g>
<g transform="translate(638 360)" fill="none" stroke="#3a6fe6" stroke-width="1.05" stroke-linecap="round"><path d="M0.4,-0.4 Q1.6,0.3 2.3,-1.6 L3.6,-5.6 Q4.3,-7.3 5.7,-6.6"/><path d="M2,-4.2 H4.6"/><path d="M4.9,-3.3 L7.7,-0.4 M7.7,-3.3 L4.9,-0.4" stroke-width="1.1"/></g>
<g transform="translate(1022 360)" fill="none" stroke="#3a6fe6" stroke-width="1.05" stroke-linecap="round"><path d="M0.4,-0.4 Q1.6,0.3 2.3,-1.6 L3.6,-5.6 Q4.3,-7.3 5.7,-6.6"/><path d="M2,-4.2 H4.6"/><path d="M4.9,-3.3 L7.7,-0.4 M7.7,-3.3 L4.9,-0.4" stroke-width="1.1"/></g>
<g transform="translate(350 420)" fill="none" stroke="#3a6fe6" stroke-width="1.05" stroke-linecap="round"><path d="M0.4,-0.4 Q1.6,0.3 2.3,-1.6 L3.6,-5.6 Q4.3,-7.3 5.7,-6.6"/><path d="M2,-4.2 H4.6"/><path d="M4.9,-3.3 L7.7,-0.4 M7.7,-3.3 L4.9,-0.4" stroke-width="1.1"/></g>
<g transform="translate(446 420)" fill="none" stroke="#3a6fe6" stroke-width="1.05" stroke-linecap="round"><path d="M0.4,-0.4 Q1.6,0.3 2.3,-1.6 L3.6,-5.6 Q4.3,-7.3 5.7,-6.6"/><path d="M2,-4.2 H4.6"/><path d="M4.9,-3.3 L7.7,-0.4 M7.7,-3.3 L4.9,-0.4" stroke-width="1.1"/></g>
<g transform="translate(1022 420)" fill="none" stroke="#3a6fe6" stroke-width="1.05" stroke-linecap="round"><path d="M0.4,-0.4 Q1.6,0.3 2.3,-1.6 L3.6,-5.6 Q4.3,-7.3 5.7,-6.6"/><path d="M2,-4.2 H4.6"/><path d="M4.9,-3.3 L7.7,-0.4 M7.7,-3.3 L4.9,-0.4" stroke-width="1.1"/></g>
<g transform="translate(1118 420)" fill="none" stroke="#3a6fe6" stroke-width="1.05" stroke-linecap="round"><path d="M0.4,-0.4 Q1.6,0.3 2.3,-1.6 L3.6,-5.6 Q4.3,-7.3 5.7,-6.6"/><path d="M2,-4.2 H4.6"/><path d="M4.9,-3.3 L7.7,-0.4 M7.7,-3.3 L4.9,-0.4" stroke-width="1.1"/></g>
<path d="M203.5,1031 L212.3,1039.8 M212.3,1031 L203.5,1039.8" stroke="#222" stroke-width="1.5"/>
<g fill="none" stroke="#e8b35e" stroke-width="1.3"><path d="M56.3,1030.4 H73 M57.5,1030.4 L65.3,1026 L72,1030.4 M63.6,1030 V1043.5 M61,1043.6 H65"/></g>
<path d="M58.6,1031 V1034.5" stroke="#a79ad0" stroke-width="1.2"/><circle cx="58.5" cy="1036" r="1.6" fill="#5031a9"/>
<path d="M65,1032 H73.1 V1042.8 H73.8 V1043.8 H64.2 V1042.8 H65 Z" fill="#5031a9"/>
<g fill="#d9c9ff" opacity="0.8"><rect x="66.3" y="1033.6" width="1.1" height="1"/><rect x="66.3" y="1035.6" width="1.1" height="1"/><rect x="66.3" y="1037.6" width="1.1" height="1"/><rect x="66.3" y="1039.6" width="1.1" height="1"/><rect x="68.6" y="1033.6" width="1.1" height="1"/><rect x="68.6" y="1035.6" width="1.1" height="1"/><rect x="68.6" y="1037.6" width="1.1" height="1"/><rect x="68.6" y="1039.6" width="1.1" height="1"/><rect x="70.89999999999999" y="1033.6" width="1.1" height="1"/><rect x="70.89999999999999" y="1035.6" width="1.1" height="1"/><rect x="70.89999999999999" y="1037.6" width="1.1" height="1"/><rect x="70.89999999999999" y="1039.6" width="1.1" height="1"/></g>
<rect x="68.2" y="1042" width="1.8" height="1.8" fill="#fde9b3"/>
</svg>
</div>
</body></html>
